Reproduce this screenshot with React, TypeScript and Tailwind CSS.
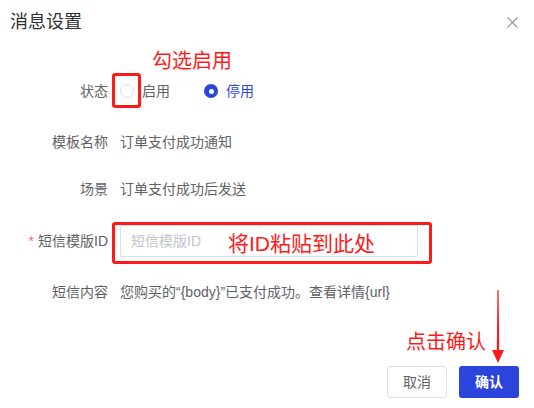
import React from "react";

const font = { fontFamily: '"Liberation Sans", "Noto Sans CJK SC", sans-serif' };

function Row({ label, children, required, className }: { label: string; children: React.ReactNode; required?: boolean; className?: string }) {
  return (
    <div className={"flex items-center h-[32px] " + (className ?? "")}>
      <div className="w-[108px] text-right text-[14px] text-[#606266] leading-[20px] shrink-0">
        {required && <span className="text-[#f56c6c] mr-[4px]">*</span>}
        {label}
      </div>
      <div className="ml-[12px] text-[14px] text-[#606266] leading-[20px] flex items-center">{children}</div>
    </div>
  );
}

export default function App() {
  return (
    <div className="relative w-[534px] h-[408px] bg-white overflow-hidden" style={font}>
      {/* header */}
      <div className="flex items-center justify-between h-[44px] pl-[10px] pr-[16px]">
        <div className="text-[18px] leading-[24px] text-[#303133]">消息设置</div>
        <svg width="11" height="11" viewBox="0 0 11 11">
          <path d="M0.5 0.5 L10.5 10.5 M10.5 0.5 L0.5 10.5" stroke="#909399" strokeWidth="1.1" />
        </svg>
      </div>

      {/* form */}
      <div className="flex flex-col mt-[31px]">
        <Row label="状态">
          <span className="flex items-center">
            <span className="w-[14px] h-[14px] rounded-full border border-[#dcdfe6] bg-white" />
            <span className="ml-[8px]">启用</span>
          </span>
          <span className="flex items-center ml-[34px]">
            <span className="w-[14px] h-[14px] rounded-full bg-[#2b45dc] flex items-center justify-center">
              <span className="w-[5px] h-[5px] rounded-full bg-white" />
            </span>
            <span className="ml-[8px] text-[#2b45dc]">停用</span>
          </span>
        </Row>
        <Row label="模板名称" className="mt-[19px]">订单支付成功通知</Row>
        <Row label="场景" className="mt-[15px]">订单支付成功后发送</Row>
        <Row label="短信模版ID" required className="mt-[20px]">
          <div className="w-[298px] h-[32px] border border-[#dcdfe6] rounded-[2px] flex items-center pl-[10px] text-[#c0c4cc]">短信模版ID</div>
        </Row>
        <Row label="短信内容" className="mt-[19px]">您购买的“{"{body}"}”已支付成功。查看详情{"{url}"}</Row>
      </div>

      {/* footer */}
      <div className="absolute left-0 right-0 bottom-[10px] flex justify-end pr-[15px] gap-[12px]">
        <button className="w-[60px] h-[32px] border border-[#dcdfe6] rounded-[3px] bg-white text-[14px] text-[#606266]">取消</button>
        <button className="w-[60px] h-[32px] rounded-[3px] bg-[#2b45dc] text-[14px] text-white font-bold">确认</button>
      </div>

      {/* annotations */}
      <div className="absolute left-[152px] top-[48px] text-[20px] leading-[26px] text-[#ff1a1a]">勾选启用</div>
      <div className="absolute left-[112px] top-[73px] w-[29px] h-[35px] border-[3px] border-[#ff1a1a] rounded-[3px]" />
      <div className="absolute left-[112px] top-[222px] w-[320px] h-[42px] border-[3px] border-[#ff1a1a] rounded-[3px]" />
      <div className="absolute left-[228px] top-[230px] text-[21px] leading-[28px] text-[#ff1a1a]">将ID粘贴到此处</div>
      <div className="absolute left-[406px] top-[329px] text-[20px] leading-[26px] text-[#ff1a1a]">点击确认</div>
      <svg className="absolute left-[490px] top-[288px]" width="16" height="78" viewBox="0 0 16 78">
        <path d="M7.4 2 L8.6 2 L9.2 62 L14 62 L8 75 L2 62 L6.8 62 Z" fill="#ff1a1a" />
      </svg>
    </div>
  );
}
